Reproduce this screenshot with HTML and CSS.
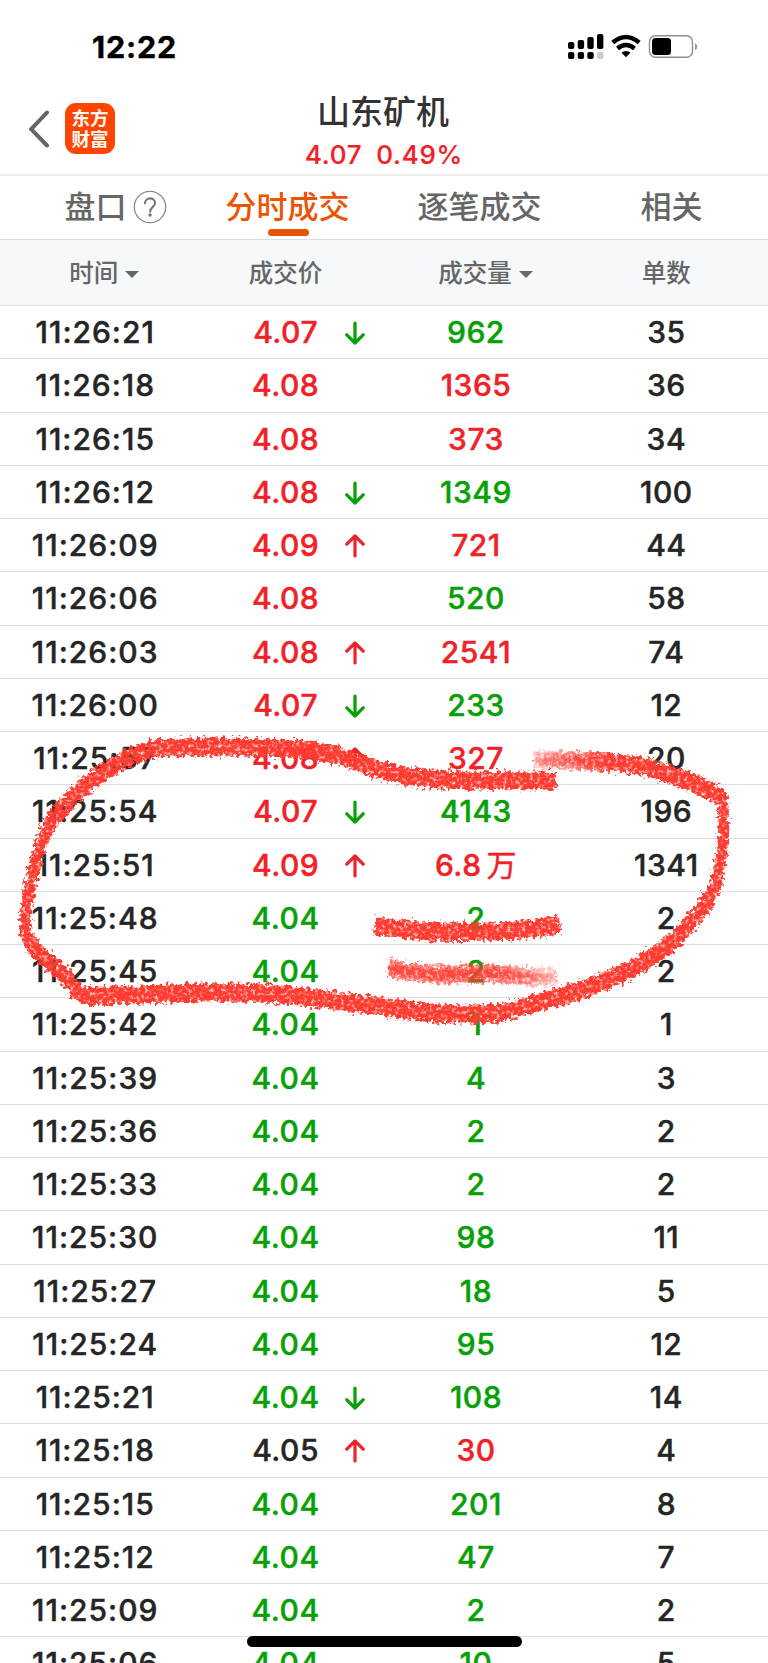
FILE: index.html
```html
<!DOCTYPE html>
<html lang="zh-CN">
<head>
<meta charset="utf-8">
<title>山东矿机</title>
<link rel="stylesheet" href="styles.css">
</head>
<body>
<div class="phone">
  <div class="status">
    <span class="clock">12:22</span>
    <svg class="status-icons" width="132" height="27" viewBox="0 0 132 27">
      <rect x="1" y="9" width="6.400" height="7" rx="2"/><rect x="10.700" y="7" width="6.400" height="9" rx="2"/><rect x="20.300" y="4" width="6.400" height="12" rx="2"/><rect x="30" y="1" width="6.400" height="15" rx="2"/>
      <rect x="1" y="19" width="6.400" height="7" rx="2"/><rect x="10.700" y="19" width="6.400" height="7" rx="2"/><rect x="20.300" y="19" width="6.400" height="7" rx="2"/><rect x="30" y="19" width="6.400" height="7" rx="2" fill="#ccc"/>
      <path d="M45.800 9.500Q59-1.500 72.200 9.500M50.500 15.500Q59 8.500 67.500 15.500" fill="none" stroke="#000" stroke-width="4.500"/>
      <path d="M54.500 19.700Q59 16.300 63.500 19.700L59 24.200Z"/>
      <rect x="82.500" y="2.700" width="43" height="21.600" rx="6" fill="none" stroke="#8e8e8e" stroke-width="1.400"/>
      <rect x="85" y="5" width="19" height="17" rx="3.500"/>
      <path d="M128 10v7.500q2.300-1.500 2.300-3.750T128 10z" fill="#999"/>
    </svg>
  </div>
  <header class="nav">
    <svg class="back" width="22" height="38" viewBox="0 0 22 38"><path d="M18 2.500 2.200 19.200 18 35.500" fill="none" stroke="#666" stroke-width="4" stroke-linecap="round"/></svg>
    <div class="logo"><span>东方</span><span>财富</span></div>
    <div class="title"><h1>山东矿机</h1><p class="quote"><span>4.07</span><span>0.49%</span></p></div>
  </header>
  <nav class="tabs">
    <div class="tab"><span class="label">盘口</span><svg class="help" width="34" height="34" viewBox="0 0 34 34"><circle cx="17" cy="17" r="15.700" fill="none" stroke="#888" stroke-width="1.300"/><path d="M12 13.500C12 6.800 22 6.700 22 13c0 4-4.900 4.300-4.900 8.600" fill="none" stroke="#777" stroke-width="2.100" stroke-linecap="round"/><circle cx="17.100" cy="25" r="1.700" fill="#777"/></svg></div>
    <div class="tab active"><span class="label">分时成交</span></div>
    <div class="tab"><span class="label">逐笔成交</span></div>
    <div class="tab"><span class="label">相关</span></div>
  </nav>
  <div class="head"><span>时间<i></i></span><span>成交价</span><span>成交量<i></i></span><span>单数</span></div>
  <svg class="defs" width="0" height="0"><symbol id="up" viewBox="0 0 20 24"><path d="M10 22V2M1.800 10.200 10 2l8.200 8.200"/></symbol><symbol id="down" viewBox="0 0 20 24"><path d="M10 2v20M1.800 13.800 10 22l8.200-8.200"/></symbol></svg>
  <main class="rows">
    <div class="row"><span>11:26:21</span><span class="r">4.07<svg class="arrow g"><use href="#down"/></svg></span><span class="g">962</span><span>35</span></div>
    <div class="row"><span>11:26:18</span><span class="r">4.08</span><span class="r">1365</span><span>36</span></div>
    <div class="row"><span>11:26:15</span><span class="r">4.08</span><span class="r">373</span><span>34</span></div>
    <div class="row"><span>11:26:12</span><span class="r">4.08<svg class="arrow g"><use href="#down"/></svg></span><span class="g">1349</span><span>100</span></div>
    <div class="row"><span>11:26:09</span><span class="r">4.09<svg class="arrow r"><use href="#up"/></svg></span><span class="r">721</span><span>44</span></div>
    <div class="row"><span>11:26:06</span><span class="r">4.08</span><span class="g">520</span><span>58</span></div>
    <div class="row"><span>11:26:03</span><span class="r">4.08<svg class="arrow r"><use href="#up"/></svg></span><span class="r">2541</span><span>74</span></div>
    <div class="row"><span>11:26:00</span><span class="r">4.07<svg class="arrow g"><use href="#down"/></svg></span><span class="g">233</span><span>12</span></div>
    <div class="row"><span>11:25:57</span><span class="r">4.08<svg class="arrow r"><use href="#up"/></svg></span><span class="r">327</span><span>20</span></div>
    <div class="row"><span>11:25:54</span><span class="r">4.07<svg class="arrow g"><use href="#down"/></svg></span><span class="g">4143</span><span>196</span></div>
    <div class="row"><span>11:25:51</span><span class="r">4.09<svg class="arrow r"><use href="#up"/></svg></span><span class="r">6.8<b>万</b></span><span>1341</span></div>
    <div class="row"><span>11:25:48</span><span class="g">4.04</span><span class="g">2</span><span>2</span></div>
    <div class="row"><span>11:25:45</span><span class="g">4.04</span><span class="g">2</span><span>2</span></div>
    <div class="row"><span>11:25:42</span><span class="g">4.04</span><span class="g">1</span><span>1</span></div>
    <div class="row"><span>11:25:39</span><span class="g">4.04</span><span class="g">4</span><span>3</span></div>
    <div class="row"><span>11:25:36</span><span class="g">4.04</span><span class="g">2</span><span>2</span></div>
    <div class="row"><span>11:25:33</span><span class="g">4.04</span><span class="g">2</span><span>2</span></div>
    <div class="row"><span>11:25:30</span><span class="g">4.04</span><span class="g">98</span><span>11</span></div>
    <div class="row"><span>11:25:27</span><span class="g">4.04</span><span class="g">18</span><span>5</span></div>
    <div class="row"><span>11:25:24</span><span class="g">4.04</span><span class="g">95</span><span>12</span></div>
    <div class="row"><span>11:25:21</span><span class="g">4.04<svg class="arrow g"><use href="#down"/></svg></span><span class="g">108</span><span>14</span></div>
    <div class="row"><span>11:25:18</span><span>4.05<svg class="arrow r"><use href="#up"/></svg></span><span class="r">30</span><span>4</span></div>
    <div class="row"><span>11:25:15</span><span class="g">4.04</span><span class="g">201</span><span>8</span></div>
    <div class="row"><span>11:25:12</span><span class="g">4.04</span><span class="g">47</span><span>7</span></div>
    <div class="row"><span>11:25:09</span><span class="g">4.04</span><span class="g">2</span><span>2</span></div>
    <div class="row"><span>11:25:06</span><span class="g">4.04</span><span class="g">10</span><span>5</span></div>
  </main>
  <svg class="ink" width="768" height="320" viewBox="0 720 768 320">
    <defs>
      <filter id="crayon" filterUnits="userSpaceOnUse" x="0" y="720" width="768" height="320" color-interpolation-filters="sRGB">
        <feTurbulence type="fractalNoise" baseFrequency=".27" numOctaves="3" seed="9" result="n"/>
        <feDisplacementMap in="SourceGraphic" in2="n" scale="12" xChannelSelector="R" yChannelSelector="G" result="d"/>
        <feGaussianBlur in="d" stdDeviation=".75" result="soft"/>
        <feColorMatrix in="n" type="matrix" values="0 0 0 0 0  0 0 0 0 0  0 0 0 0 0  0 0 2.200 0 -.1" result="grain"/>
        <feComposite in="soft" in2="grain" operator="in"/>
      </filter>
      <linearGradient id="fadeIn" gradientUnits="userSpaceOnUse" x1="532" y1="0" x2="610" y2="0"><stop stop-color="#ff3b30" stop-opacity=".22"/><stop offset="1" stop-color="#ff3b30"/></linearGradient>
      <linearGradient id="fadeOut" gradientUnits="userSpaceOnUse" x1="500" y1="0" x2="555" y2="0"><stop stop-color="#ff3b30" stop-opacity=".7"/><stop offset="1" stop-color="#ff3b30" stop-opacity=".2"/></linearGradient>
      <g id="strokes" fill="none" stroke-width="10" stroke-linejoin="round">
        <path stroke="url(#fadeIn)" d="M534 760C570 760 615 762 640 766C672 772 700 787 722 796"/>
        <path stroke="#ff3b30" d="M722 796C726 823 723 850 718 876C712 901 695 918 679 936C650 963 605 985 550 999C520 1008 505 1013 490 1014C465 1015 430 1014 400 1009C355 1003 310 997 275 994C215 990 145 995 86 996C77 994 73 986 68 979C56 965 34 954 27 936C23 921 27 896 31 882C38 850 44 827 59 812C84 784 107 764 151 749C205 745 280 746 320 752C355 757 374 772 406 776C452 783 505 779 556 781"/>
        <path stroke="#ff3b30" d="M375 926C400 930 430 932 465 932C505 932 535 930 559 924"/>
        <path stroke="url(#fadeOut)" d="M389 968C430 978 460 974 490 973C520 975 535 979 556 977"/>
      </g>
    </defs>
    <g filter="url(#crayon)"><use href="#strokes" y="-4"/><use href="#strokes"/><use href="#strokes" y="4"/></g>
  </svg>
  <div class="home"></div>
</div>
</body>
</html>
```
FILE: styles.css
```css
* { box-sizing: border-box; }
body { margin: 0; background: #fff; }
.phone {
  position: relative;
  width: 768px;
  height: 1663px;
  overflow: hidden;
  color: #252525;
  font-family: Inter, "Noto Sans CJK SC", sans-serif;
}
.status { display: flex; justify-content: space-between; align-items: flex-start; height: 94px; padding: 33px 69px 0 92px; }
.clock { color: #000; font-size: 30.500px; font-weight: 700; line-height: 28px; letter-spacing: .8px; -webkit-text-stroke: .4px; }
.nav { display: flex; align-items: flex-start; height: 82px; border-bottom: 2px solid #ededed; padding-left: 29px; }
.back { margin-top: 16px; }
.logo {
  display: flex; flex-direction: column; align-items: center; justify-content: center;
  width: 50px; height: 51px; margin: 9px 0 0 14px; border-radius: 11px;
  background: #ff4500; color: #fff; font-size: 18.500px; font-weight: 700; line-height: 21px;
}
.title { width: 260px; margin-left: 138px; text-align: center; }
h1 { margin: 0; font-size: 33px; font-weight: 500; line-height: 36px; color: #333; }
.quote { display: flex; justify-content: center; gap: 14px; margin: 10px 0 0; padding-left: 2px; font-size: 26px; font-weight: 500; line-height: 30px; color: #f02228; letter-spacing: .7px; -webkit-text-stroke: .2px; }
.tabs { display: grid; grid-template-columns: repeat(4, 192px); height: 64px; border-bottom: 1px solid #dddfe4; }
.tab { position: relative; display: flex; justify-content: center; font-size: 31px; font-weight: 500; line-height: 62px; color: #666; }
.label { margin-left: -1px; }
.help { position: absolute; left: 133px; top: 14px; }
.active { color: #ea5504; }
.active::after { content: ""; position: absolute; left: 76px; top: 53px; width: 41px; height: 6.500px; border-radius: 4px; background: #ea5504; }
.head {
  display: grid; grid-template-columns: repeat(4, 190.400px); height: 66px; border-bottom: 1px solid #dddfe4;
  background: #f7f8fa; color: #666; font-size: 24.500px; font-weight: 500; line-height: 66px; text-align: center;
}
.head span { display: flex; align-items: center; justify-content: center; }
.head i { margin: 2px -1px 0 7px; border: 7px solid transparent; border-top-color: #666; border-bottom: 0; }
.head span:nth-child(1) { padding-left: 17px; }
.head span:nth-child(3) { padding-left: 18px; }
.defs { position: absolute; }
.row {
  display: grid; grid-template-columns: repeat(4, 190.400px); height: 53.250px; border-bottom: 1px solid #dfe0e5;
  font-size: 30px; font-weight: 500; line-height: 53px; text-align: center; letter-spacing: .5px; -webkit-text-stroke: .45px;
}
.row span { position: relative; }
.row span:first-child { letter-spacing: 1px; }
.r { color: #f02228; }
.g { color: #07a007; }
.row b { margin-left: 5px; font-weight: 400; }
.arrow { position: absolute; left: 155px; top: 15px; width: 20px; height: 24px; fill: none; stroke: currentColor; stroke-width: 3.200; stroke-linecap: round; stroke-linejoin: round; }
.ink { position: absolute; left: 0; top: 720px; }
.home { position: absolute; left: 247px; top: 1636px; width: 275px; height: 11px; border-radius: 6px; background: #000; }
```
